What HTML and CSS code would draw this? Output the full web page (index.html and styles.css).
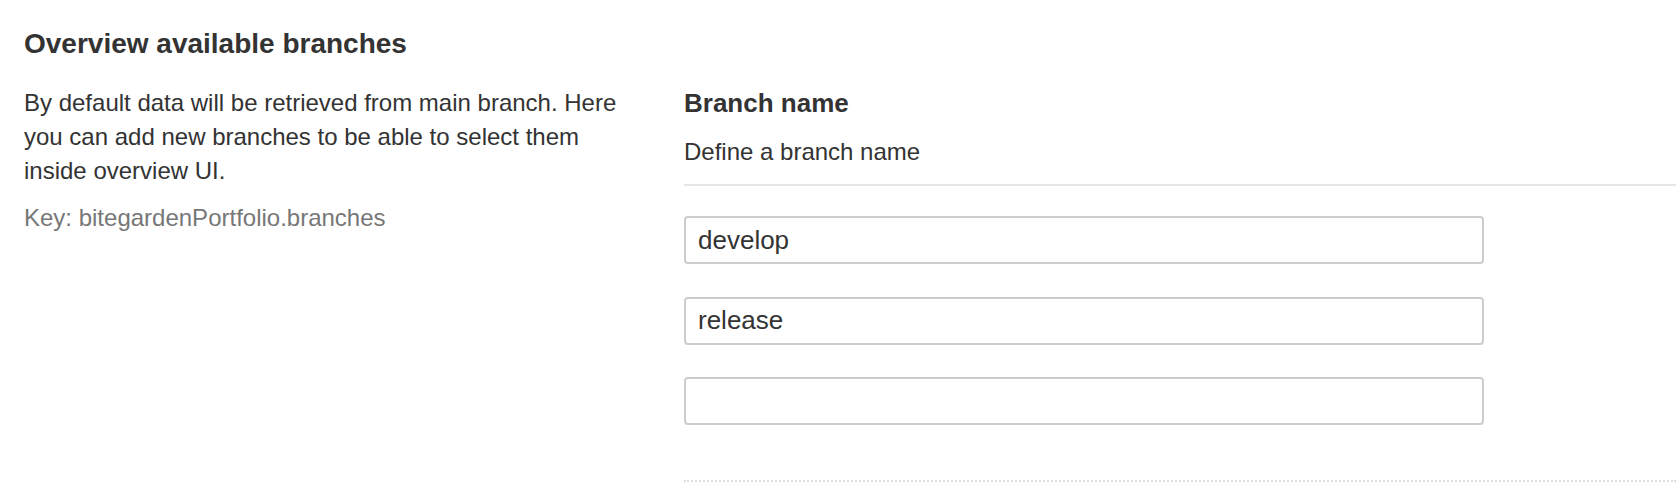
FILE: index.html
```html
<!DOCTYPE html>
<html lang="en">
<head>
<meta charset="utf-8">
<title>Overview available branches</title>
<link rel="stylesheet" href="styles.css">
</head>
<body>
<div class="definition">
  <h2 class="def-title">Overview available branches</h2>
  <div class="def-row">
    <div class="def-left">
      <p class="def-desc">By default data will be retrieved from main branch. Here you can add new branches to be able to select them inside overview UI.</p>
      <p class="def-key">Key: bitegardenPortfolio.branches</p>
    </div>
    <div class="def-right">
      <div class="field-head">
        <div class="field-label">Branch name</div>
        <div class="field-help">Define a branch name</div>
      </div>
      <div class="field-list">
        <input class="field-input" type="text" value="develop">
        <input class="field-input" type="text" value="release">
        <input class="field-input" type="text" value="">
      </div>
      <div class="field-foot"></div>
    </div>
  </div>
</div>
</body>
</html>
```

FILE: styles.css
```css
html, body {
  margin: 0;
  padding: 0;
  background: #ffffff;
}

body {
  font-family: "Liberation Sans", Arial, Helvetica, sans-serif;
  color: #333333;
}

.definition {
  padding: 26px 0 0 24px;
}

.def-title {
  margin: 0;
  font-size: 28px;
  line-height: 36px;
  font-weight: bold;
  color: #333333;
}

.def-row {
  display: flex;
  margin-top: 24px;
}

.def-left {
  width: 610px;
  flex: none;
}

.def-desc {
  margin: 0;
  font-size: 24px;
  line-height: 34px;
  color: #333333;
}

.def-key {
  margin: 13px 0 0;
  font-size: 24px;
  line-height: 34px;
  color: #777777;
}

.def-right {
  flex: 1;
  margin-left: 50px;
}

.field-head {
  border-bottom: 2px solid #e6e6e6;
  padding-bottom: 15px;
}

.field-label {
  font-size: 26px;
  line-height: 34px;
  font-weight: bold;
  color: #333333;
}

.field-help {
  margin-top: 15px;
  font-size: 24px;
  line-height: 34px;
  color: #333333;
}

.field-list {
  display: flex;
  flex-direction: column;
  gap: 32.5px;
  padding-top: 30px;
}

.field-input {
  box-sizing: border-box;
  width: 800px;
  height: 48px;
  margin: 0;
  padding: 0 12px;
  border: 2px solid #cccccc;
  border-radius: 4px;
  background: #ffffff;
  font-family: "Liberation Sans", Arial, Helvetica, sans-serif;
  font-size: 26px;
  color: #333333;
  outline: none;
}

.field-foot {
  margin-top: 55px;
  border-top: 2px dotted #dddddd;
}
```
